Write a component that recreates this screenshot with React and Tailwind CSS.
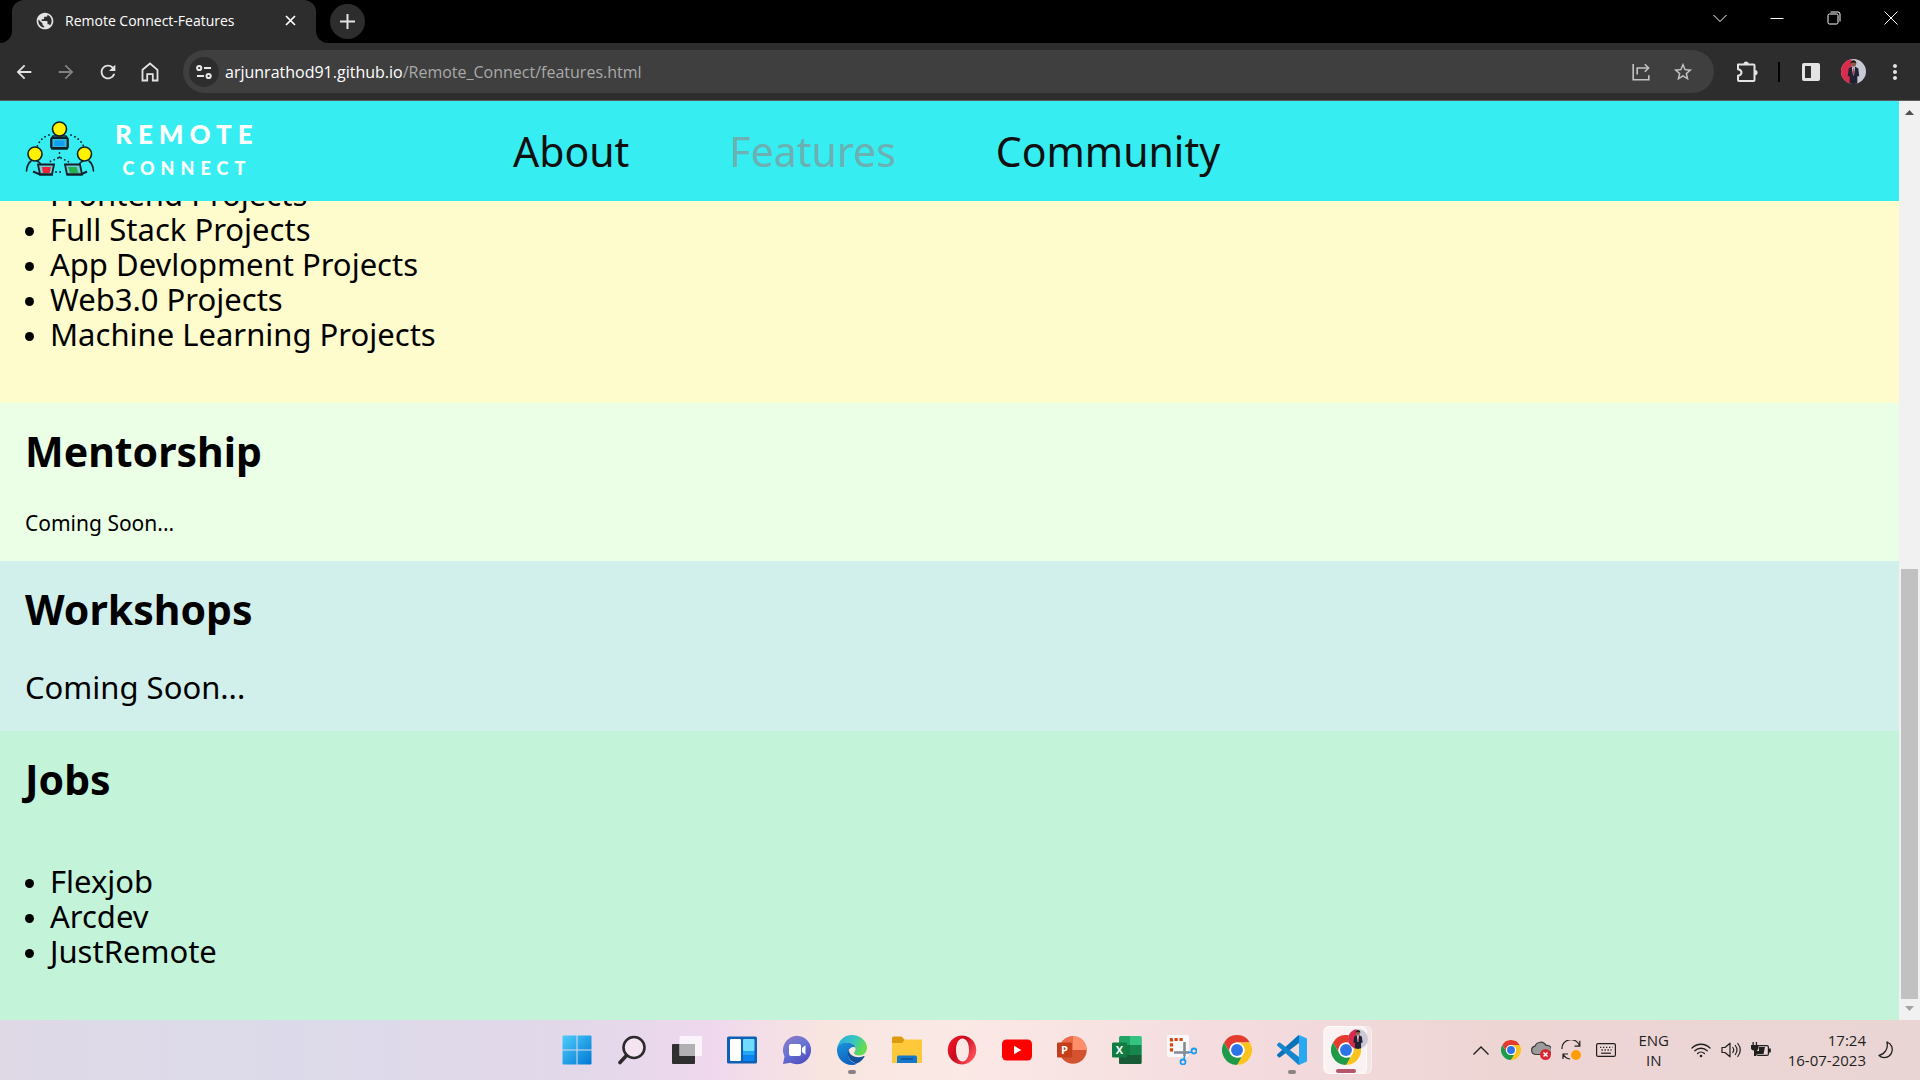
import { useId } from "react";
import {
  MdArrowBack,
  MdArrowForward,
  MdRefresh,
  MdPublic,
  MdStarBorder,
  MdMoreVert,
} from "react-icons/md";

/* ---------- Browser icons ---------- */

const HomeIcon = () => (
  <svg width="18" height="20" viewBox="0 0 18 20" fill="none" stroke="#e3e3e3" strokeWidth="1.8">
    <path d="M1.500 7.800 9 1.500l7.500 6.300v10.700h-4.700v-6.300H6.200v6.300H1.500z" />
  </svg>
);

const PuzzleIcon = () => (
  <svg width="22" height="22" viewBox="0 0 22 22" fill="none" stroke="#e3e3e3" strokeWidth="2" strokeLinejoin="round">
    <path d="M2 3.500h15.500a1 1 0 0 1 1 1V19a1 1 0 0 1-1 1H3a1 1 0 0 1-1-1v-4.200q3.500-.6 3.500-3.300T2 8.200z" />
    <path d="M7.500 3a2.600 2.600 0 0 1 5.200 0zM19 9a2.600 2.600 0 0 1 0 5.200z" fill="#e3e3e3" stroke="none" />
  </svg>
);

const TuneIcon = () => (
  <svg width="16" height="16" viewBox="0 0 16 16" fill="none" stroke="#e8e8e8" strokeWidth="2">
    <circle cx="3.2" cy="4" r="2.1" />
    <path d="M8 4h7M1 12h7" />
    <circle cx="12.6" cy="12" r="2.1" />
  </svg>
);

const ShareIcon = () => (
  <svg width="18" height="18" viewBox="0 0 18 18" fill="none" stroke="#c3c3c3" strokeWidth="1.6">
    <path d="M1.2 1v15.8h15.6v-4.5" />
    <path d="M5.2 11.5V5h11" />
    <path d="M12.8 1.2 16.6 5l-3.8 3.8" />
  </svg>
);

const PanelIcon = () => (
  <svg width="18" height="18" viewBox="0 0 18 18">
    <rect width="18" height="18" rx="2" fill="#e3e3e3" />
    <rect x="3" y="3" width="6" height="12" fill="#2d2d2d" />
  </svg>
);

const Avatar = ({ className }) => {
  const id = useId();
  return (
    <svg className={className} viewBox="0 0 26 26">
      <clipPath id={id}>
        <circle cx="13" cy="13" r="13" />
      </clipPath>
      <g clipPath={`url(#${id})`}>
        <rect width="26" height="26" fill="#c9c8d6" />
        <path d="M0 0h11v26H0z" fill="#d92b4b" />
        <path d="M8 10l3-2h4l3 2 1 8h-2v8H9v-8H7z" fill="#1f2233" />
        <path d="M11.500 8.500h3L13.500 17h-1z" fill="#eef0f5" />
        <path d="M12.700 9.500h.9l.3 7h-1.300z" fill="#b5213c" />
        <circle cx="13" cy="5" r="2.800" fill="#8a5a44" />
        <path d="M10 5c-.2-5 6.200-5 6 0-.8-1.800-5.200-1.800-6 0z" fill="#17130f" />
      </g>
    </svg>
  );
};

/* ---------- Site logo ---------- */

const Person = ({ x, y }) => (
  <circle cx={x} cy={y} r="7" fill="#fff200" stroke="#12202a" strokeWidth="1.6" />
);

const LogoMark = () => (
  <svg className="mb-1" width="70" height="56" viewBox="0 0 70 56" fill="none" stroke="#12202a">
    <g strokeWidth="1.8" strokeLinecap="round" strokeDasharray="0.1 4">
      <path d="M24 14q-9 3-12 12" />
      <path d="M46 14q9 3 13 12" />
      <path d="M34.500 32v5M33 37l-11 5M36 37l10 5M31 51h8" />
    </g>
    <g strokeWidth="1.6" strokeLinecap="round">
      <path d="M6 40q-4 3-4.500 10M12 40q3 1 4 4" />
      <path d="M64 40q4 3 4.500 10M58 40q-3 1-4 4" />
    </g>
    <path d="M28 15h13l2 3v8l-1 2H27l-1-2v-8z" strokeWidth="1.600" />
    <rect x="26.500" y="17" width="16" height="10" rx="1" fill="#35b9d8" strokeWidth="1.800" />
    <rect x="29.500" y="19.500" width="10" height="5.500" fill="#0f9ff0" stroke="none" />
    <path d="M13 43.500h16l-2 10H15z" fill="#6fcdd6" strokeWidth="1.800" />
    <path d="M17 46h9l-1.500 6H18z" fill="#ee2233" stroke="none" />
    <path d="M8 50.500l7 3H28" strokeWidth="2" />
    <path d="M40 43.500h15l2 10H42z" fill="#6fcdd6" strokeWidth="1.800" />
    <path d="M43 46h8.500l2 6H45z" fill="#22b14c" stroke="none" />
    <path d="M62 50.500l-6 3H42" strokeWidth="2" />
    <Person x={34.500} y={8} />
    <Person x={10} y={33} />
    <Person x={59.500} y={33} />
  </svg>
);

/* ---------- Taskbar icons ---------- */

const StartIcon = () => (
  <svg width="30" height="30" viewBox="0 0 30 30">
    <defs>
      <linearGradient id="start" x1="0" y1="0" x2="1" y2="1">
        <stop offset="0" stopColor="#4ccdfb" />
        <stop offset="1" stopColor="#0078d4" />
      </linearGradient>
    </defs>
    <path
      fill="url(#start)"
      d="M.5 1.500a1 1 0 0 1 1-1H14.500V14.500H.5zM15.500.5H28.500a1 1 0 0 1 1 1V14.500H15.500zM.5 15.500H14.500V29.500H1.500a1 1 0 0 1-1-1zM15.500 15.500H29.500V28.500a1 1 0 0 1-1 1H15.500z"
    />
  </svg>
);

const SearchIcon = () => (
  <svg width="30" height="30" viewBox="0 0 30 30" fill="none" stroke="#2b2b2b" strokeLinecap="round">
    <circle cx="17" cy="12.500" r="10.500" strokeWidth="2.600" fill="#f3e4f0" />
    <path d="M9.500 20.500 3 27.500" strokeWidth="3.600" />
  </svg>
);

const TaskViewIcon = () => (
  <svg width="30" height="30" viewBox="0 0 30 30">
    <rect x="0" y="9" width="23" height="20" rx="1" fill="#2f2f2f" />
    <rect x="7.500" y="1" width="22.500" height="20" rx="1" fill="#fff" opacity=".72" />
    <rect x="7.500" y="9" width="15.500" height="12" fill="#b3b0b3" />
  </svg>
);

const WidgetsIcon = () => (
  <svg width="30" height="30" viewBox="0 0 30 30">
    <rect y="1.500" width="30" height="27" rx="1.500" fill="#0f5fb3" />
    <rect x="3" y="4" width="11" height="22" rx="1" fill="#fff" />
    <rect x="16" y="4" width="11.500" height="12" rx="1" fill="#6fdcff" />
    <rect x="16" y="16" width="11.500" height="4.500" fill="#1fa6fb" />
    <rect x="16" y="20.500" width="11.500" height="5.500" rx="1" fill="#0a84ee" />
  </svg>
);

const ChatIcon = () => (
  <svg width="30" height="30" viewBox="0 0 30 30">
    <defs>
      <linearGradient id="chat" x1="0" y1="0" x2=".6" y2="1">
        <stop offset="0" stopColor="#8f7bbd" />
        <stop offset=".5" stopColor="#6a75d4" />
        <stop offset="1" stopColor="#5152c2" />
      </linearGradient>
    </defs>
    <path d="M15 .8a14.200 14.200 0 1 1-6.500 26.900L1 29l1.500-7.500A14.200 14.200 0 0 1 15 .8z" fill="url(#chat)" />
    <rect x="7" y="9" width="12" height="12" rx="2" fill="#fff" />
    <path d="M20 13l3.500-2.800v9.600L20 17z" fill="#fff" />
  </svg>
);

const EdgeIcon = () => (
  <svg width="30" height="30" viewBox="0 0 30 30">
    <defs>
      <linearGradient id="edgeTop" x1="0" y1="0" x2="1" y2=".4">
        <stop offset="0" stopColor="#2aa8e0" />
        <stop offset=".55" stopColor="#35c4c4" />
        <stop offset="1" stopColor="#63dc4e" />
      </linearGradient>
      <linearGradient id="edgeLeft" x1="0" y1="0" x2=".5" y2="1">
        <stop offset="0" stopColor="#1c94dc" />
        <stop offset="1" stopColor="#0c62c0" />
      </linearGradient>
    </defs>
    <path d="M0 14C1 6 7 0 15 0s15 6 15 12.500c0 5-3.500 8-8 8-3.500 0-5-1.500-5-2.500s1.500-1.600 1.500-4c0-3-3-6.500-8.500-6.500-5 0-9 3-10 6.500z" fill="url(#edgeTop)" />
    <path d="M0 14C1 10 4.500 7.500 9.500 7.500c4.500 0 8 2 9 5-1-1-7.500-1-7.500 6.500 0 6 5 9.500 9 9.500-1.500 1-3.500 1.500-5 1.500C6 30 0 23 0 15z" fill="url(#edgeLeft)" />
    <path d="M11.500 14.500C9 21 13 27 19.500 28.500c3.500-1 6-3.500 8-6.800.3-.7-.2-1-.8-.7-6 3-14.500.5-15.200-6.500z" fill="#14539c" />
  </svg>
);

const ExplorerIcon = () => (
  <svg width="30" height="30" viewBox="0 0 30 30">
    <path d="M0 3a1.500 1.500 0 0 1 1.500-1.500h8L13 5v4H0z" fill="#dc9a0c" />
    <path d="M0 8h10l3-3.500h17V28H0z" fill="#fdc93a" />
    <path d="M5 28v-6a1.500 1.500 0 0 1 1.500-1.500h17A1.500 1.500 0 0 1 25 22v6z" fill="#1479cc" />
    <path d="M9 24h12" stroke="#0b4f94" strokeWidth="1.500" />
  </svg>
);

const OperaIcon = () => (
  <svg width="30" height="30" viewBox="0 0 30 30">
    <defs>
      <linearGradient id="opera" x1="0" y1="0" x2="1" y2=".6">
        <stop offset="0" stopColor="#ff1b2d" />
        <stop offset=".5" stopColor="#c60c1e" />
        <stop offset="1" stopColor="#ff5058" />
      </linearGradient>
    </defs>
    <path
      fillRule="evenodd"
      fill="url(#opera)"
      d="M15 .5a14.300 14.500 0 1 0 .01 0zM15.500 3.500c4 0 6.500 5 6.500 11.500s-2.500 11.500-6.500 11.500S9 21.500 9 15s2.500-11.500 6.500-11.500z"
    />
  </svg>
);

const YouTubeIcon = () => (
  <svg width="30" height="30" viewBox="0 0 30 30">
    <rect y="4.500" width="30" height="21" rx="4.500" fill="#f00" />
    <path d="M12 10.700v8.600l7.300-4.300z" fill="#fff" />
  </svg>
);

const PowerPointIcon = () => (
  <svg width="30" height="30" viewBox="0 0 30 30">
    <circle cx="16" cy="15" r="13.700" fill="#d35230" />
    <path d="M16 1.300A13.700 13.700 0 0 1 29.700 15H16z" fill="#ff8f6b" />
    <path d="M16 1.300A13.700 13.700 0 0 0 2.300 15H16z" fill="#ed6c47" />
    <rect x="0" y="7.500" width="15" height="15" rx="1.200" fill="#c43e1c" />
    <text x="7.500" y="19" textAnchor="middle" fill="#fff" className="font-['Open_Sans',sans-serif] text-[11px] font-bold">P</text>
  </svg>
);

const ExcelIcon = () => (
  <svg width="30" height="30" viewBox="0 0 30 30">
    <rect x="7" y="1" width="22.500" height="28" rx="1.500" fill="#21a366" />
    <path d="M18 1h10a1.500 1.500 0 0 1 1.500 1.500V10H18z" fill="#33c481" />
    <path d="M7 10h11v10H7z" fill="#107c41" />
    <path d="M7 20h22.500v7.500A1.500 1.500 0 0 1 28 29H8.500A1.500 1.500 0 0 1 7 27.500z" fill="#185c37" />
    <path d="M18 10h11.500v10H18z" fill="#17864c" />
    <rect x="0" y="7.500" width="15" height="15" rx="1.200" fill="#107c41" />
    <text x="7.500" y="19" textAnchor="middle" fill="#fff" className="font-['Open_Sans',sans-serif] text-[11px] font-bold">X</text>
  </svg>
);

const SnipIcon = () => (
  <svg width="30" height="30" viewBox="0 0 30 30" fill="none">
    <rect width="22" height="22" rx="1.500" fill="#f7f9fb" />
    <path d="M4.500 16.500v-12h12" stroke="#d8430f" strokeWidth="3.200" strokeDasharray="3.200 1.800" />
    <path d="M17.500 7v14M7 17.500h15" stroke="#858c94" strokeWidth="2.600" />
    <circle cx="27" cy="16" r="2.500" stroke="#1d9cf0" strokeWidth="1.800" />
    <circle cx="16" cy="27" r="2.500" stroke="#1d9cf0" strokeWidth="1.800" />
    <path d="M21 17.500l4-.5M17.500 21l-.5 4" stroke="#1d9cf0" strokeWidth="1.600" />
  </svg>
);

const ChromeIcon = ({ className }) => (
  <svg className={className} viewBox="0 0 48 48">
    <circle cx="24" cy="24" r="24" fill="#fff" />
    <path d="M3.200 12A24 24 0 0 1 44.800 12H24a12 12 0 0 0-10.400 18z" fill="#e33b2e" />
    <path d="M3.200 12 13.600 30A12 12 0 0 0 24 36h10.400L24 48A24 24 0 0 1 3.200 12z" fill="#1f9a48" />
    <path d="M44.800 12A24 24 0 0 1 24 48L34.400 30A12 12 0 0 0 34.400 18L24 12z" fill="#fcc31e" />
    <circle cx="24" cy="24" r="12" fill="#fff" />
    <circle cx="24" cy="24" r="9.500" fill="#2f74e6" />
  </svg>
);

const VSCodeIcon = () => (
  <svg width="30" height="30" viewBox="0 0 30 30">
    <path d="M22 0 30 3.500v23L22 30z" fill="#2aa9f2" />
    <path d="M22 8 3.200 22.300a1.300 1.300 0 0 1-1.600 0L.4 21.100a1.200 1.200 0 0 1 0-1.800L21 .6Q22 0 22 0z" fill="#0a72b8" />
    <path d="M22 22 3.200 7.700a1.300 1.300 0 0 0-1.600 0L.4 8.900a1.200 1.200 0 0 0 0 1.800L21 29.400q1 .6 1 .6z" fill="#1285cf" />
  </svg>
);

/* ---------- Tray icons ---------- */

const CloudErrorIcon = () => (
  <svg width="20" height="20" viewBox="0 0 20 20">
    <path d="M4.500 14.500a4.200 4.200 0 0 1-.5-8.300A6 6 0 0 1 15 5.500a4.600 4.600 0 0 1 2 9z" fill="#9b9b9b" stroke="#3a3a3a" strokeWidth="1.200" />
    <circle cx="14.500" cy="14.500" r="5.500" fill="#d92632" />
    <path d="M12.500 12.500l4 4M16.500 12.500l-4 4" stroke="#fff" strokeWidth="1.500" />
  </svg>
);

const SyncIcon = () => (
  <svg width="20" height="20" viewBox="0 0 20 20" fill="none" stroke="#1f1f1f" strokeWidth="1.200">
    <path d="M1 9a9 8.500 0 0 1 17.500-3.500M18.800.8v5.400h-5.300" />
    <path d="M2 19v-5h5M2 14a9 9 0 0 0 7 5" />
    <circle cx="15" cy="15" r="5" fill="#ff9d0a" stroke="none" />
  </svg>
);

const KeyboardIcon = () => (
  <svg width="20" height="14" viewBox="0 0 20 14" fill="none" stroke="#1f1f1f">
    <rect x=".6" y=".6" width="18.800" height="12.800" rx="1.500" strokeWidth="1.200" />
    <path d="M4 4.300h12.500M5.500 7h10" strokeWidth="1.300" strokeDasharray="1.300 1.700" />
    <path d="M5 10.200h10" strokeWidth="1.200" />
  </svg>
);

const WifiIcon = () => (
  <svg width="20" height="16" viewBox="0 0 20 16" fill="none" stroke="#1f1f1f" strokeWidth="1.300" strokeLinecap="round">
    <path d="M1 6a12.700 12.700 0 0 1 18 0M3.800 8.800a8.800 8.800 0 0 1 12.400 0M6.600 11.500a4.900 4.900 0 0 1 6.800 0" />
    <circle cx="10" cy="14" r="1.300" fill="#1f1f1f" stroke="none" />
  </svg>
);

const SoundIcon = () => (
  <svg width="20" height="16" viewBox="0 0 20 16" fill="none" stroke="#1f1f1f" strokeWidth="1.200" strokeLinecap="round" strokeLinejoin="round">
    <path d="M1 5.500v5h3l5 4.300V1.200L4 5.500z" />
    <path d="M11.800 5.500q1.800 2.500 0 5M14.300 3.500q3.400 4.500 0 9M16.800 1.500q5 6.500 0 13" />
  </svg>
);

const BatteryIcon = () => (
  <svg width="20" height="16" viewBox="0 0 20 16">
    <rect x="5.600" y="3.600" width="11.800" height="9.800" rx="1.500" fill="none" stroke="#1f1f1f" strokeWidth="1.200" />
    <rect x="18" y="6.500" width="1.800" height="4" fill="#1f1f1f" />
    <path d="M5 12h7.500l1.500-7H8v4H5z" fill="#1f1f1f" />
    <path d="M0 3h1.500V0h1.300v3h2V0h1.300v3H7.500v3q0 2-2.500 2.500V14H3V8.500Q0 8 0 6z" fill="#1f1f1f" />
  </svg>
);

const MoonIcon = () => (
  <svg width="18" height="18" viewBox="0 0 18 18" fill="none" stroke="#1f1f1f" strokeWidth="1.300" strokeLinejoin="round">
    <path d="M9 1a8 8 0 1 1-8 13.500C6 13.500 10.500 8.500 9 1z" />
  </svg>
);

/* ---------- Data ---------- */

const navLinks = [
  { label: "About", color: "text-[#101010]" },
  { label: "Features", color: "text-[#6bb0b2]" },
  { label: "Community", color: "text-[#101010]" },
];

const projects = [
  "Frontend Projects",
  "Full Stack Projects",
  "App Devlopment Projects",
  "Web3.0 Projects",
  "Machine Learning Projects",
];

const jobs = ["Flexjob", "Arcdev", "JustRemote"];

const taskbarApps = [
  { name: "Start", icon: <StartIcon /> },
  { name: "Search", icon: <SearchIcon /> },
  { name: "Task View", icon: <TaskViewIcon /> },
  { name: "Widgets", icon: <WidgetsIcon /> },
  { name: "Chat", icon: <ChatIcon /> },
  { name: "Edge", icon: <EdgeIcon />, running: true },
  { name: "File Explorer", icon: <ExplorerIcon /> },
  { name: "Opera", icon: <OperaIcon /> },
  { name: "YouTube", icon: <YouTubeIcon /> },
  { name: "PowerPoint", icon: <PowerPointIcon /> },
  { name: "Excel", icon: <ExcelIcon /> },
  { name: "Snipping Tool", icon: <SnipIcon /> },
  { name: "Chrome", icon: <ChromeIcon className="size-[30px]" /> },
  { name: "Visual Studio Code", icon: <VSCodeIcon />, running: true },
];

/* ---------- Browser ---------- */

function WindowButton({ label, children }) {
  return (
    <button aria-label={label} className="flex h-9 w-[57px] items-center justify-center">
      <svg width="14" height="14" viewBox="0 0 14 14" fill="none" stroke="#fff" strokeWidth="1">
        {children}
      </svg>
    </button>
  );
}

function TabStrip() {
  return (
    <div className="flex h-[43px] items-start bg-black">
      <div className="flex h-full items-end">
        <svg width="12" height="12" viewBox="0 0 12 12">
          <path d="M12 0v12H0A12 12 0 0 0 12 0z" fill="#2d2d2d" />
        </svg>
        <div className="flex h-full w-[304px] items-center rounded-t-xl bg-[#2d2d2d] pr-4 pb-0.5 pl-[23px]">
          <MdPublic className="size-5 text-[#e3e3e3]" />
          <span className="flex-1 pl-2.5 text-[14px] text-white">Remote Connect-Features</span>
          <button aria-label="Close tab" className="flex size-5 items-center justify-center">
            <svg width="11" height="11" viewBox="0 0 11 11" stroke="#fff" strokeWidth="1.700">
              <path d="M1 1l9 9M10 1l-9 9" />
            </svg>
          </button>
        </div>
        <svg width="12" height="12" viewBox="0 0 12 12">
          <path d="M0 0v12h12A12 12 0 0 1 0 0z" fill="#2d2d2d" />
        </svg>
      </div>
      <button aria-label="New tab" className="mt-1 ml-0.5 flex size-[35px] items-center justify-center rounded-full bg-[#2d2d2d]">
        <svg width="15" height="15" viewBox="0 0 15 15" stroke="#e3e3e3" strokeWidth="2">
          <path d="M7.500 0v15M0 7.500h15" />
        </svg>
      </button>
      <div className="ml-auto flex pr-px">
        <WindowButton label="Search tabs">
          <path d="M.5 4 7 10.500 13.500 4" />
        </WindowButton>
        <WindowButton label="Minimize">
          <path d="M.5 7.500h13" />
        </WindowButton>
        <WindowButton label="Restore">
          <rect x="1" y="3" width="10" height="10" rx="1.500" />
          <path d="M3.500 1h7.500a2 2 0 0 1 2 2v7.500" />
        </WindowButton>
        <WindowButton label="Close">
          <path d="M.5.5l13 13M13.500.5l-13 13" />
        </WindowButton>
      </div>
    </div>
  );
}

function ToolButton({ label, children }) {
  return (
    <button aria-label={label} className="flex h-9 w-[42px] shrink-0 items-center justify-center text-[#e3e3e3]">
      {children}
    </button>
  );
}

function Toolbar() {
  return (
    <div className="flex h-[58px] items-center border-b border-[#5c5c5c] bg-[#2d2d2d] pr-1 pl-[3px]">
      <ToolButton label="Back"><MdArrowBack className="size-[22px]" /></ToolButton>
      <ToolButton label="Forward"><MdArrowForward className="size-[22px] text-[#818181]" /></ToolButton>
      <ToolButton label="Reload"><MdRefresh className="size-[22px]" /></ToolButton>
      <ToolButton label="Home"><HomeIcon /></ToolButton>
      <div className="ml-3 flex h-[43px] flex-1 items-center rounded-full bg-[#3f3f3f] pr-2.5 pl-1.5">
        <button aria-label="Site information" className="flex size-[30px] items-center justify-center rounded-full bg-[#2d2d2d]">
          <TuneIcon />
        </button>
        <div className="flex-1 pl-1.5 text-[16px] text-[#a9a9a9]">
          <span className="text-white">arjunrathod91.github.io</span>/Remote_Connect/features.html
        </div>
        <ToolButton label="Share"><ShareIcon /></ToolButton>
        <ToolButton label="Bookmark"><MdStarBorder className="size-[22px] text-[#c3c3c3]" /></ToolButton>
      </div>
      <div className="ml-3 flex items-center">
        <ToolButton label="Extensions"><PuzzleIcon /></ToolButton>
        <div className="mx-2.5 h-5 w-0.5 bg-black" />
        <ToolButton label="Side panel"><PanelIcon /></ToolButton>
        <ToolButton label="Profile"><Avatar className="size-[25px]" /></ToolButton>
        <ToolButton label="Menu"><MdMoreVert className="size-6" /></ToolButton>
      </div>
    </div>
  );
}

function Scrollbar() {
  return (
    <div className="flex w-[21px] shrink-0 flex-col items-center bg-[#f1f1f1]">
      <svg width="21" height="21" viewBox="0 0 21 21">
        <path d="M6 14l4.500-5 4.500 5z" fill="#505050" />
      </svg>
      <div className="flex w-full flex-1 flex-col justify-end px-0.5">
        <div className="h-[49%] bg-[#c1c1c1]" />
      </div>
      <svg width="21" height="21" viewBox="0 0 21 21">
        <path d="M6 7l4.500 5L15 7z" fill="#a3a3a3" />
      </svg>
    </div>
  );
}

/* ---------- Page ---------- */

function Header() {
  return (
    <header className="flex h-[100px] shrink-0 items-center bg-[#36eef1] pl-[25px]">
      <a href="#home" className="flex w-[488px] items-center gap-5">
        <LogoMark />
        <span className="flex flex-col items-center gap-0.5 font-['Lato',sans-serif] font-black text-white">
          <span className="text-[26px] leading-8 tracking-[6px]">REMOTE</span>
          <span className="text-[18px] leading-8 tracking-[6px]">CONNECT</span>
        </span>
      </a>
      <nav className="flex gap-[100px] text-[41px] leading-[60px]">
        {navLinks.map((link) => (
          <a key={link.label} href={`#${link.label.toLowerCase()}`} className={link.color}>
            {link.label}
          </a>
        ))}
      </nav>
    </header>
  );
}

function Section({ title, bg, children }) {
  return (
    <section className={`shrink-0 px-[25px] pt-6 pb-[26px] ${bg}`}>
      <h2 className="mb-9 text-[41px] leading-[48px] font-bold">{title}</h2>
      {children}
    </section>
  );
}

function BulletList({ items }) {
  return (
    <ul className="list-none py-[25px] text-[31px] leading-[35px]">
      {items.map((item) => (
        <li key={item} className="flex items-center gap-4">
          <span className="mt-1 size-[9px] rounded-full bg-black" />
          {item}
        </li>
      ))}
    </ul>
  );
}

function FeaturesPage() {
  return (
    <div className="flex min-w-0 flex-1 flex-col font-['Noto_Sans',sans-serif] text-black">
      <Header />
      {/* scrolled to the end, so older content is cut off by the header */}
      <main className="flex min-h-0 flex-1 flex-col justify-end overflow-hidden">
        <section className="flex flex-auto flex-col justify-end bg-[#fefbcc] px-[25px] pb-[26px]">
          <BulletList items={projects} />
        </section>
        <Section title="Mentorship" bg="bg-[#eaffe5]">
          <p className="text-[21px] leading-6">Coming Soon...</p>
        </Section>
        <Section title="Workshops" bg="bg-[#d1efeb]">
          <p className="text-[31px] leading-9">Coming Soon...</p>
        </Section>
        <Section title="Jobs" bg="bg-[#c3f4da]">
          <BulletList items={jobs} />
        </Section>
      </main>
    </div>
  );
}

/* ---------- Taskbar ---------- */

function TrayItem({ label, children }) {
  return (
    <button aria-label={label} className="flex h-10 w-[30px] items-center justify-center">
      {children}
    </button>
  );
}

function Taskbar() {
  return (
    <footer className="grid h-[60px] shrink-0 grid-cols-[1fr_auto_1fr] items-center bg-[linear-gradient(to_right,#dfd9e6,#dcdaea_15%,#e2d8ea_30%,#efd8ee_37%,#f8e5e0_43%,#fbe9e6_50%,#f4dbde_65%,#edd5d4_78%,#ead5d5)] pl-[3px] text-[#1f1f1f]">
      <div />
      <div className="flex">
        {taskbarApps.map((app) => (
          <button key={app.name} aria-label={app.name} className="relative flex h-12 w-[55px] items-center justify-center">
            {app.icon}
            {app.running && <span className="absolute bottom-0 h-1 w-2 rounded-full bg-[#8b8184]" />}
          </button>
        ))}
        <button aria-label="Chrome window" className="flex h-12 w-[55px] items-center pl-1">
          <span className="flex h-12 items-center rounded-md border border-white/40 bg-white/30 pr-1">
            <span className="relative flex h-12 w-[43px] items-center justify-center rounded-md border border-white/60 bg-white/50">
              <ChromeIcon className="size-[30px]" />
              <Avatar className="absolute top-0.5 -right-0.5 size-5" />
              <span className="absolute bottom-0 h-1 w-5 rounded-full bg-[#b5566b]" />
            </span>
          </span>
        </button>
      </div>
      <div className="flex items-center justify-end pr-6 text-[15px] leading-5">
        <TrayItem label="Show hidden icons">
          <svg width="16" height="9" viewBox="0 0 16 9" fill="none" stroke="#1f1f1f" strokeWidth="1.400">
            <path d="M.5 8.500 8 1l7.500 7.500" />
          </svg>
        </TrayItem>
        <TrayItem label="Chrome"><ChromeIcon className="size-5" /></TrayItem>
        <TrayItem label="OneDrive"><CloudErrorIcon /></TrayItem>
        <TrayItem label="Update"><SyncIcon /></TrayItem>
        <div className="ml-1 flex w-8 justify-center"><KeyboardIcon /></div>
        <button className="w-16 text-center">ENG<br />IN</button>
        <TrayItem label="Wi-Fi"><WifiIcon /></TrayItem>
        <TrayItem label="Volume"><SoundIcon /></TrayItem>
        <TrayItem label="Battery"><BatteryIcon /></TrayItem>
        <button className="ml-3 min-w-[75px] text-right">17:24<br />16-07-2023</button>
        <button aria-label="Focus assist" className="ml-3">
          <MoonIcon />
        </button>
      </div>
    </footer>
  );
}

export default function App() {
  return (
    <div className="flex h-screen flex-col overflow-hidden font-['Open_Sans',sans-serif]">
      <TabStrip />
      <Toolbar />
      <div className="flex min-h-0 flex-1">
        <FeaturesPage />
        <Scrollbar />
      </div>
      <Taskbar />
    </div>
  );
}
